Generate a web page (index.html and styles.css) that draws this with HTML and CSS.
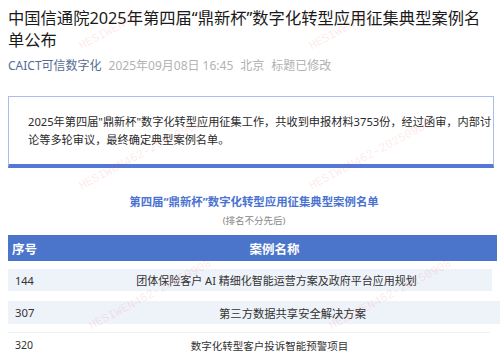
FILE: index.html
```html
<!DOCTYPE html>
<html lang="zh-CN">
<head>
<meta charset="utf-8">
<link rel="stylesheet" href="styles.css">
</head>
<body>
<div class="page">
  <h1 class="title">中国信通院2025年第四届“鼎新杯”数字化转型应用征集典型案例名单公布</h1>
  <div class="meta">
    <span class="source">CAICT可信数字化</span>
    <span class="muted">2025年09月08日 16:45</span>
    <span class="muted">北京</span>
    <span class="muted">标题已修改</span>
  </div>
  <div class="notice">
    <p>2025年第四届"鼎新杯"数字化转型应用征集工作，共收到申报材料3753份，经过函审，内部讨论等多轮审议，最终确定典型案例名单。</p>
  </div>
  <h2 class="list-title">第四届“鼎新杯”数字化转型应用征集典型案例名单</h2>
  <div class="list-sub">(排名不分先后)</div>
  <div class="thead">
    <div class="c-no">序号</div>
    <div class="c-name">案例名称</div>
  </div>
  <div class="row row-a">
    <div class="c-no">144</div>
    <div class="c-name">团体保险客户 AI 精细化智能运营方案及政府平台应用规划</div>
  </div>
  <div class="row row-b">
    <div class="c-no">307</div>
    <div class="c-name">第三方数据共享安全解决方案</div>
  </div>
  <div class="row row-c">
    <div class="c-no">320</div>
    <div class="c-name">数字化转型客户投诉智能预警项目</div>
  </div>
  <span class="wm wm1">HESIWEN462</span>
  <span class="wm wm2">HESIWEN462</span>
  <span class="wm wm3">HESIWEN462-20250908</span>
  <span class="wm wm4">HESIWEN462-20250908</span>
  <span class="wm wm5">HESIWEN462-20250908</span>
  <span class="wm wm6">HESIWEN462-20250908</span>
</div>
</body>
</html>
```
FILE: styles.css
```css
html, body {
  margin: 0;
  padding: 0;
  background: #fff;
}
body {
  font-family: "Noto Sans", "Noto Sans CJK SC", sans-serif;
  color: #333;
  width: 500px;
  height: 357px;
  overflow: hidden;
}
.page {
  position: relative;
  padding: 7px 0 0 8px;
}
.title {
  margin: 0;
  font-size: 16.3px;
  line-height: 22px;
  font-weight: 400;
  color: #1a1a1a;
  padding-right: 14px;
}
.meta {
  margin-top: 7px;
  font-size: 12px;
  line-height: 16px;
  display: flex;
  gap: 7px;
}
.source { color: #576b95; }
.muted { color: #b2b2b2; }
.notice {
  margin-top: 22px;
  margin-right: 6px;
  border: 1px solid #aabcf0;
  border-bottom: 4px solid #5478d6;
  padding: 16px 1px 15px 19px;
}
.notice p {
  margin: 0;
  font-size: 11.2px;
  line-height: 18px;
  color: #2a2a2a;
}
.list-title {
  margin: 25px 0 0;
  text-align: center;
  font-size: 11.4px;
  line-height: 18px;
  font-weight: 700;
  color: #4a73d1;
}
.list-sub {
  margin-top: 3px;
  text-align: center;
  font-size: 9.5px;
  line-height: 14px;
  color: #888;
}
.thead {
  margin-top: 7px;
  margin-right: 3px;
  height: 26px;
  background: #4b74cb;
  display: flex;
  align-items: center;
  color: #fff;
  font-weight: 700;
  font-size: 12.5px;
}
.thead .c-no { padding-left: 4px; width: 40px; }
.thead .c-name { flex: 1; text-align: center; }
.row {
  display: flex;
  align-items: center;
  font-size: 11px;
  color: #333;
}
.row .c-no { padding-left: 7px; width: 40px; }
.row .c-name { flex: 1; text-align: center; }
.row-a {
  margin-top: 8px;
  margin-right: 8px;
  height: 22px;
  background: #eef2f9;
}
.row-a .c-name { padding-left: 6px; }
.row-b {
  margin-top: 10px;
  height: 23px;
  background: #eef2f9;
  font-size: 11.3px;
}
.row-b .c-name { padding-left: 30px; }
.row-c {
  margin-top: 8px;
  margin-right: 10px;
  border-top: 1px solid #eceff3;
  height: 24px;
  font-size: 10.5px;
}
.row-c .c-name { padding-right: 6px; }
.wm {
  position: absolute;
  font-family: "Liberation Mono", monospace;
  font-size: 12px;
  font-weight: 400;
  color: rgba(240, 70, 70, 0.13);
  transform: rotate(-28deg);
  transform-origin: left center;
  white-space: nowrap;
  pointer-events: none;
}
.wm1 { left: 80px; top: 40px; }
.wm2 { left: 310px; top: 40px; }
.wm3 { left: 80px; top: 180px; }
.wm4 { left: 310px; top: 180px; }
.wm5 { left: 90px; top: 320px; }
.wm6 { left: 330px; top: 320px; }
```
